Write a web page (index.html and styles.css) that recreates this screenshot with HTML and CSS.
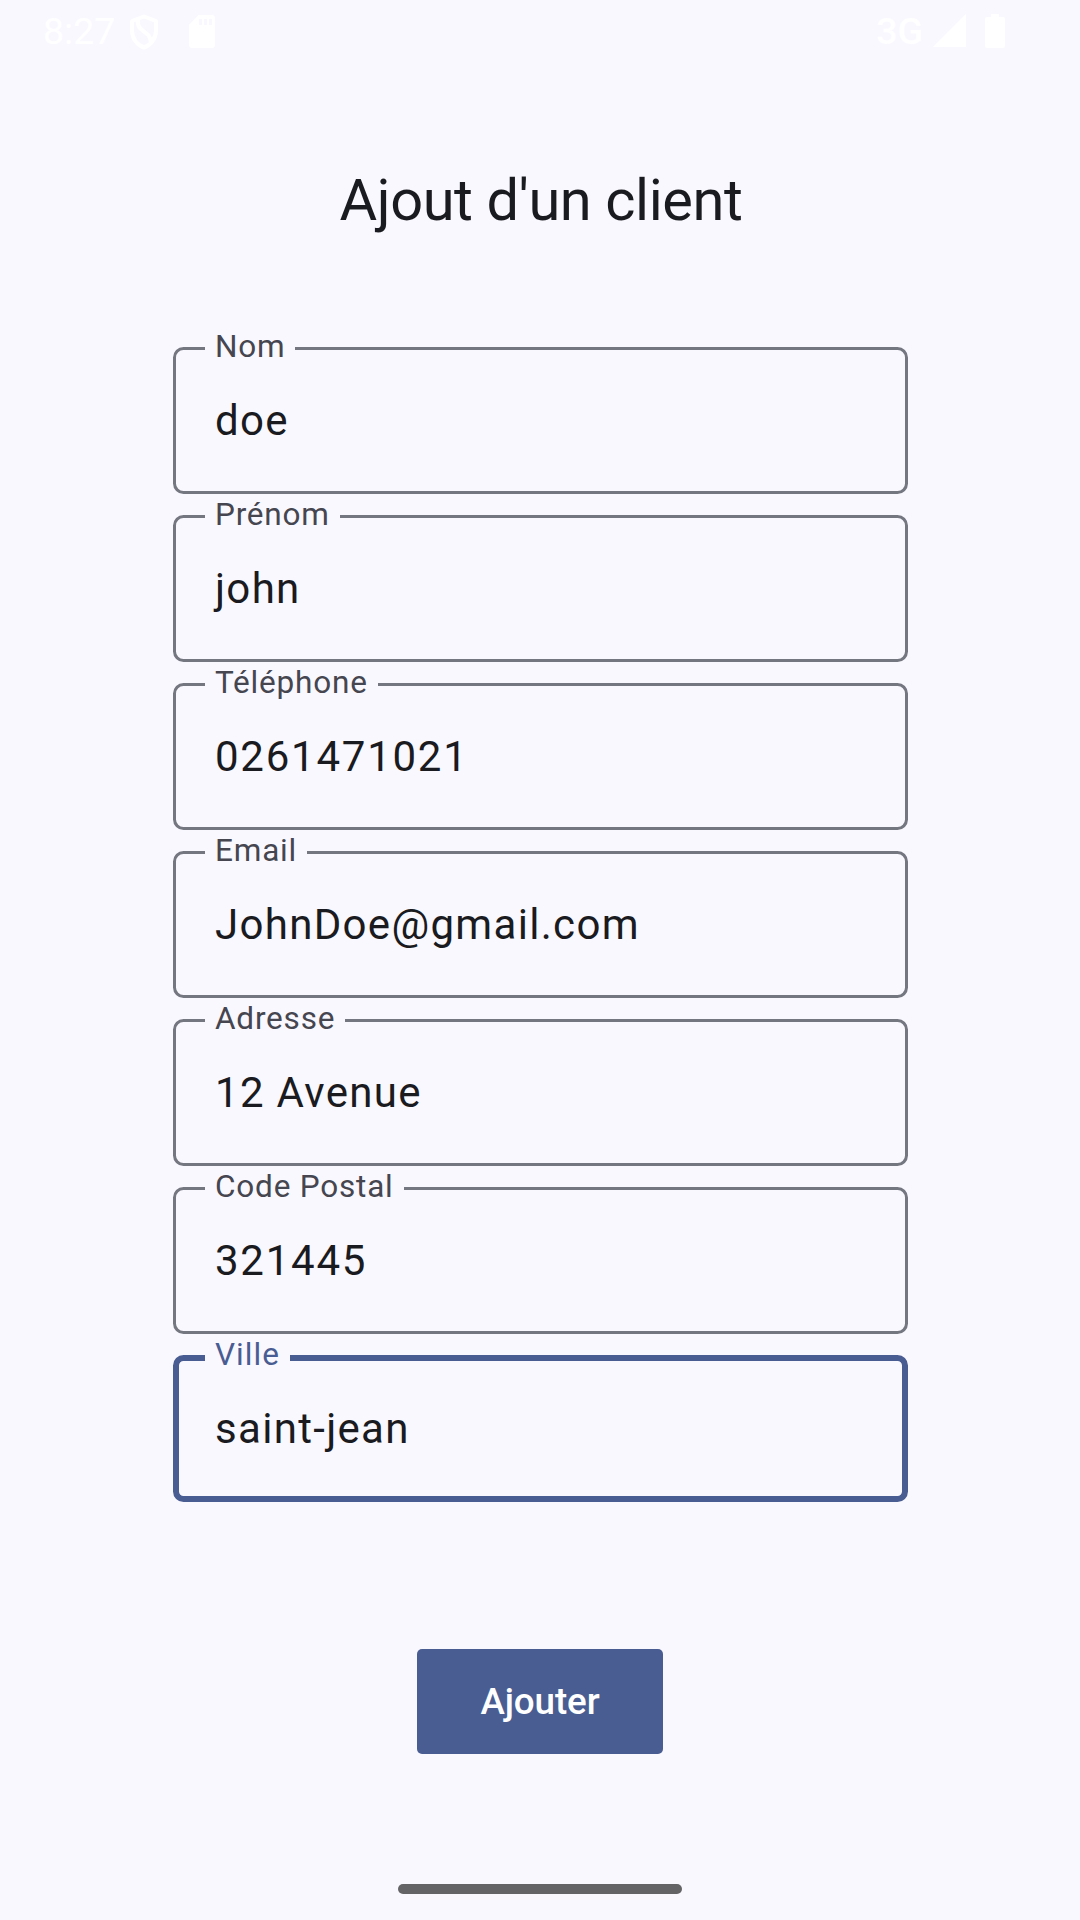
FILE: index.html
```html
<!DOCTYPE html>
<html lang="fr">
<head>
<meta charset="utf-8">
<title>Ajout d'un client</title>
<link rel="stylesheet" href="styles.css">
</head>
<body>
<div class="screen">
  <header class="status">
    <span class="clock">8:27</span>
    <svg class="shield" width="30" height="36" viewBox="0 0 30 36" fill="none" stroke="#fff" stroke-width="4" stroke-linejoin="round"><path d="M15 2.500 27 7v9.500C27 24.500 22 31 15 33.500 8 31 3 24.500 3 16.500V7Z"/><path d="M9 5.500C7 19 21 15 22 28.500"/></svg>
    <svg class="sdcard" width="26" height="33" viewBox="0 0 26 33"><path fill="#fff" d="M9.500 0H23a3 3 0 0 1 3 3v27a3 3 0 0 1-3 3H3a3 3 0 0 1-3-3V10Z"/><path fill="#faf8ff" d="M10 4h3v6h-3zM15 4h3v6h-3zM20 4h3v6h-3z"/></svg>
    <span class="network">3G</span>
    <svg class="signal" width="33" height="33" viewBox="0 0 33 33"><path fill="#fff" d="M33 0V33H0Z"/></svg>
    <svg class="battery" width="20" height="34" viewBox="0 0 20 34"><path fill="#fff" d="M6 0h8v3h4a2 2 0 0 1 2 2v27a2 2 0 0 1-2 2H2a2 2 0 0 1-2-2V5a2 2 0 0 1 2-2h4Z"/></svg>
  </header>
  <h1 class="title">Ajout d'un client</h1>
  <main class="form">
    <div class="field"><span class="label">Nom</span><span class="value">doe</span></div>
    <div class="field"><span class="label">Prénom</span><span class="value">john</span></div>
    <div class="field"><span class="label">Téléphone</span><span class="value numeric">0261471021</span></div>
    <div class="field"><span class="label">Email</span><span class="value">JohnDoe@gmail.com</span></div>
    <div class="field"><span class="label">Adresse</span><span class="value">12 Avenue</span></div>
    <div class="field"><span class="label">Code Postal</span><span class="value numeric">321445</span></div>
    <div class="field focused"><span class="label">Ville</span><span class="value">saint-jean</span></div>
  </main>
  <button class="submit" type="button">Ajouter</button>
  <div class="home-bar"></div>
</div>
</body>
</html>
```
FILE: styles.css
```css
* { box-sizing: border-box; }
body {
  margin: 0;
  background: #faf8ff;
  color: #1a1b21;
  font-family: Roboto, sans-serif;
}
.screen {
  display: flex;
  flex-direction: column;
  align-items: center;
  width: 1080px;
  height: 1920px;
  overflow: hidden;
}
.status {
  display: flex;
  align-items: flex-start;
  width: 100%;
  height: 63px;
  padding: 14px 75px 0 43px;
  color: #fff;
}
.clock, .network {
  margin-top: -1px;
  font-size: 37.5px;
  line-height: 36px;
}
.clock { width: 86px; }
.network { margin-right: 10px; margin-left: auto; font-weight: 500; }
.sdcard { margin: 1px 0 0 30px; }
.signal { margin-right: 19px; }
.title {
  margin: 101px 0 0;
  padding-left: 2px;
  font-size: 57.75px;
  font-weight: 400;
  line-height: 72px;
  letter-spacing: -0.4px;
}
.form {
  display: flex;
  flex-direction: column;
  gap: 21px;
  width: 735px;
  margin-top: 111px;
}
.field {
  display: flex;
  flex-direction: column;
  align-items: flex-start;
  height: 147px;
  padding: 0 29px;
  border: 3px solid #757780;
  border-radius: 10.5px;
}
.label {
  margin-top: -21px;
  padding: 0 10px 0 10.5px;
  background: #faf8ff;
  color: #45464f;
  font-size: 31.5px;
  line-height: 36px;
  letter-spacing: 0.8px;
}
.value {
  margin: 29px 0 0 10.5px;
  font-size: 42px;
  line-height: 54px;
  letter-spacing: 1.3125px;
}
.numeric { letter-spacing: 1.75px; }
.focused {
  padding: 0 26px;
  border: 6px solid #495d92;
}
.focused .label { margin-top: -24px; color: #495d92; letter-spacing: 1.05px; }
.submit {
  width: 246px;
  height: 105px;
  margin-top: 147px;
  padding: 0;
  border: 0;
  border-radius: 5px;
  background: #495d92;
  color: #fff;
  font: 500 36.75px/52px Roboto, sans-serif;
  letter-spacing: -0.1px;
}
.home-bar {
  width: 284px;
  height: 10px;
  margin-top: 130px;
  border-radius: 5px;
  background: #646466;
}
```
